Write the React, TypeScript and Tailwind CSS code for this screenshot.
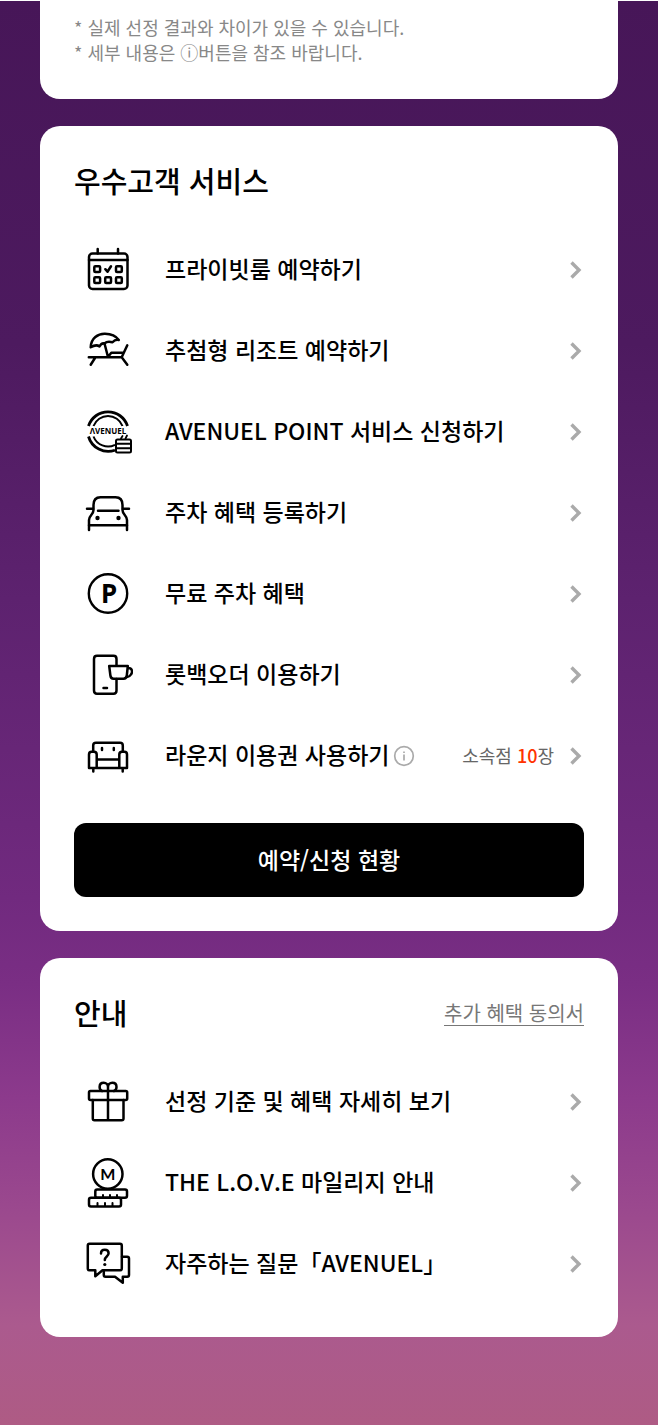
import type { ReactNode } from "react";

type Item = {
  label: string;
  icon: ReactNode;
  info?: boolean;
  count?: number;
};

function Icon({ children }: { children: ReactNode }) {
  return (
    <svg
      aria-hidden
      viewBox="0 0 50 50"
      className="size-[50px] shrink-0"
      fill="none"
      stroke="#000"
      strokeWidth="2.5"
      strokeLinecap="round"
      strokeLinejoin="round"
    >
      {children}
    </svg>
  );
}

const CalendarIcon = () => (
  <Icon>
    <rect x="6" y="8.5" width="38.5" height="35.5" rx="3.5" />
    <path d="M6 15H44.5M14.7 4V8.5M35 4V8.5" />
    <rect x="11.3" y="21.3" width="5.8" height="5.8" rx="1" />
    <rect x="33" y="21.3" width="5.8" height="5.8" rx="1" />
    <rect x="11.3" y="32.3" width="5.8" height="5.8" rx="1" />
    <rect x="22.2" y="32.3" width="5.8" height="5.8" rx="1" />
    <rect x="33" y="32.3" width="5.8" height="5.8" rx="1" />
    <path d="M22.3 24.2L24.5 26.7L28 21.3" />
  </Icon>
);

const BeachIcon = () => (
  <Icon>
    <path d="M7.7 21.3C8 12 15 7.5 22 7.7C28 7.8 33 10 35.8 14C33 13 31.5 14 29.5 16.3C27 15.5 23.5 15.5 21.5 17.5C19.5 17 17.5 18.5 16.5 20.5C14 18.5 11.5 19 7.7 21.3Z" />
    <path d="M21.5 17.5L25 31L28.3 26.7H39.5M5.8 31.3H38.7M12 32L7.7 38.7M44.3 19.3L38.7 31.3L44.3 38.7" />
  </Icon>
);

const AvenuelIcon = () => (
  <Icon>
    <path d="M5.5 19A20.5 20.5 0 0 1 44.5 19M5.5 29.5A20.5 20.5 0 0 0 32 43.2" strokeWidth="2.8" strokeLinecap="butt" />
    <path d="M10.5 19A15.5 15.5 0 0 1 39.5 19M10.5 29.5A15.5 15.5 0 0 0 32 37.8" strokeWidth="2" strokeLinecap="butt" />
    <text
      x="25"
      y="27"
      textAnchor="middle"
      fontSize="8"
      fontWeight="700"
      fill="#000"
      stroke="none"
      className="font-['Noto_Sans',sans-serif]"
    >
      ΛVENUEL
    </text>
    <rect x="33" y="32.5" width="15" height="13" rx="1.5" strokeWidth="2" fill="#fff" />
    <path d="M33 36.8H48M33 41.2H48" strokeWidth="2" />
    <path d="M38 31.5L39.5 29M42.5 31.5L44 28.5" strokeWidth="1.8" />
  </Icon>
);

const CarIcon = () => (
  <Icon>
    <path d="M6 42V32C6 27.5 10.5 26.5 10.5 22V17C10.5 12 13 9.2 17.5 9.2H32.5C37 9.2 39.5 12 39.5 17V22C39.5 26.5 44 27.5 44 32V42" />
    <path d="M4 20.8H10M40 20.8H46M15 22.8H35.5M6 37.3H44" />
    <circle cx="14.5" cy="30" r="2.2" fill="#000" stroke="none" />
    <circle cx="35.5" cy="30" r="2.2" fill="#000" stroke="none" />
  </Icon>
);

const ParkingIcon = () => (
  <Icon>
    <circle cx="25" cy="24.5" r="19.2" strokeWidth="2.4" />
    <text
      x="26"
      y="33.7"
      textAnchor="middle"
      fontSize="26"
      fontWeight="700"
      fill="#000"
      stroke="none"
      className="font-['Noto_Sans',sans-serif]"
    >
      P
    </text>
  </Icon>
);

const OrderIcon = () => (
  <Icon>
    <path d="M33.5 15V9Q33.5 5.8 30.5 5.8H14Q11 5.8 11 9V40.5Q11 43.7 14 43.7H30.5Q33.5 43.7 33.5 40.5V29" />
    <path d="M26.2 16H44.8L43.8 25.5Q43.4 28.7 40.5 28.7H30.5Q27.8 28.7 27.4 25.5ZM44.8 18C49 17.5 50 21.5 48 24.5C47 26.3 45.5 27 43.5 27.2" />
    <path d="M20.5 38H24" />
  </Icon>
);

const SofaIcon = () => (
  <Icon>
    <path d="M10.2 20V14.5Q10.2 11.8 13 11.8H37Q39.8 11.8 39.8 14.5V20" />
    <path d="M6 37V23.5Q6 20.7 8.5 20.7H11Q13.7 20.7 13.7 23.5V37M36.3 37V23.5Q36.3 20.7 39 20.7H41.5Q44 20.7 44 23.5V37M6 37H44M13.7 28.4H36.3M10.3 37V40.5M39.7 37V40.5" />
    <path d="M19 17V19M30.8 17V19" />
  </Icon>
);

const GiftIcon = () => (
  <Icon>
    <rect x="6" y="14" width="38.2" height="9" rx="1.5" />
    <path d="M9.8 23V41.5Q9.8 43.3 11.5 43.3H38.7Q40.5 43.3 40.5 41.5V23M25 14V43.3" />
    <path d="M25 14V10C25 7.5 23 5.8 20.8 5.8C18.3 5.8 16.6 7.5 16.6 10C16.6 12 17.5 13.5 19 14M25 10C25 7.5 27 5.8 29.3 5.8C31.8 5.8 33.5 7.5 33.5 10C33.5 12 32.5 13.5 31 14" />
  </Icon>
);

const MileageIcon = () => (
  <Icon>
    <circle cx="24.8" cy="16" r="14.7" />
    <text
      x="24.8"
      y="22"
      textAnchor="middle"
      fontSize="16"
      fontWeight="700"
      fill="#000"
      stroke="none"
      className="font-['Lato',sans-serif]"
    >
      M
    </text>
    <rect x="12.3" y="31.6" width="31.7" height="8.2" rx="2" />
    <rect x="6" y="39.8" width="32" height="8.7" rx="2" fill="#fff" />
    <path d="M20 37V39M27 37V39M34 37V39M14.5 45V48M22 45V48M29.5 45V48" strokeWidth="2" />
  </Icon>
);

const FaqIcon = () => (
  <Icon>
    <path d="M6.5 4.8H37Q38.8 4.8 38.8 6.5V29.5Q38.8 31.3 37 31.3H19.5L12.3 37.3V31.3H6.5Q4.8 31.3 4.8 29.5V6.5Q4.8 4.8 6.5 4.8Z" />
    <path d="M39 17.8H44.2Q46 17.8 46 19.5V36Q46 37.7 44.2 37.7H39.8V43.8L32 37.7H22.5Q20.8 37.7 20.8 36V32" />
    <path d="M18 14.5C18 12 19.7 10.8 21.8 10.8C24 10.8 25.6 12.2 25.6 14.3C25.6 17.5 21.8 17.5 21.8 21" />
    <circle cx="21.8" cy="25.5" r="1.6" fill="#000" stroke="none" />
  </Icon>
);

function Chevron() {
  return (
    <svg aria-hidden viewBox="0 0 12 18" className="h-[18px] w-3 shrink-0" fill="none" stroke="#aaa" strokeWidth="3.4">
      <path d="M1.5 1.5L9 9L1.5 16.5" />
    </svg>
  );
}

const services: Item[] = [
  { label: "프라이빗룸 예약하기", icon: <CalendarIcon /> },
  { label: "추첨형 리조트 예약하기", icon: <BeachIcon /> },
  { label: "AVENUEL POINT 서비스 신청하기", icon: <AvenuelIcon /> },
  { label: "주차 혜택 등록하기", icon: <CarIcon /> },
  { label: "무료 주차 혜택", icon: <ParkingIcon /> },
  { label: "롯백오더 이용하기", icon: <OrderIcon /> },
  { label: "라운지 이용권 사용하기", icon: <SofaIcon />, info: true, count: 10 },
];

const guides: Item[] = [
  { label: "선정 기준 및 혜택 자세히 보기", icon: <GiftIcon /> },
  { label: "THE L.O.V.E 마일리지 안내", icon: <MileageIcon /> },
  { label: "자주하는 질문「AVENUEL」", icon: <FaqIcon /> },
];

function MenuList({ items }: { items: Item[] }) {
  return (
    <ul>
      {items.map((item) => (
        <li key={item.label} className="flex h-[81px] items-center pr-0.5 pl-[9px]">
          <a href="#" className="flex items-center gap-8 text-[23px] leading-8 font-medium whitespace-nowrap">
            {item.icon}
            <span className="pb-1">{item.label}</span>
          </a>
          {item.info && (
            <button type="button" aria-label="이용 안내" className="ml-1 shrink-0">
              <svg aria-hidden viewBox="0 0 22 22" className="size-[22px]" fill="none" stroke="#aaa" strokeWidth="1.7">
                <circle cx="11" cy="11" r="9.3" />
                <path d="M11 9.5V15.5M11 6.5V8" />
              </svg>
            </button>
          )}
          <a href="#" aria-label={item.label} className="flex grow items-center justify-end gap-4">
            {item.count !== undefined && (
              <span className="pb-0.5 text-lg whitespace-nowrap text-[#666]">
                소속점 <span className="font-medium text-[#ff3300]">{item.count}</span>장
              </span>
            )}
            <Chevron />
          </a>
        </li>
      ))}
    </ul>
  );
}

export default function App() {
  return (
    <main
      lang="ko"
      className="flex min-h-screen flex-col gap-[27px] border-t border-white bg-[linear-gradient(to_bottom,#471658_0%,#4d1a5f_24%,#5d226f_42%,#712a7f_63%,#7a2e84_69%,#8c3a8c_77%,#9b498e_85%,#ab5a8e_93%,#ae5b84_100%)] px-10 pb-[88px] font-['Noto_Sans_CJK_KR',sans-serif] text-black"
    >
      <section className="rounded-b-[20px] bg-white px-[34px] pt-3.5 pb-[34px] text-lg leading-[25px] text-[#888]">
        <p>* 실제 선정 결과와 차이가 있을 수 있습니다.</p>
        <p>* 세부 내용은 ⓘ버튼을 참조 바랍니다.</p>
      </section>

      <section className="rounded-[20px] bg-white px-[34px] pt-8 pb-[34px]">
        <h2 className="mb-[27px] text-[29px] leading-[44px] font-medium">우수고객 서비스</h2>
        <MenuList items={services} />
        <button
          type="button"
          className="mt-[27px] h-[74px] w-full rounded-xl bg-black pb-0.5 text-[23px] font-medium text-white"
        >
          예약/신청 현황
        </button>
      </section>

      <section className="rounded-[20px] bg-white px-[34px] pt-8 pb-[33px]">
        <div className="mb-[27px] flex items-center justify-between">
          <h2 className="text-[29px] leading-[44px] font-medium">안내</h2>
          <a href="#" className="mt-0.5 border-b border-[#777] text-xl leading-6 text-[#777]">
            추가 혜택 동의서
          </a>
        </div>
        <MenuList items={guides} />
      </section>
    </main>
  );
}
